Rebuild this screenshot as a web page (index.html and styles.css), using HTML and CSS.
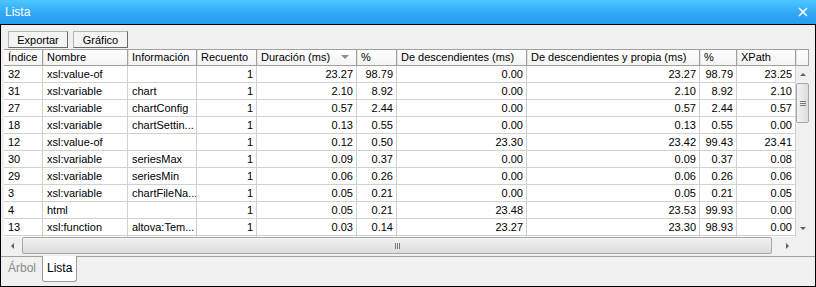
FILE: index.html
```html
<!DOCTYPE html>
<html lang="es">
<head>
<meta charset="utf-8">
<title>Lista</title>
<link rel="stylesheet" href="styles.css">
</head>
<body>
<div class="window">
  <div class="titlebar">
    <span class="title">Lista</span>
    <svg class="close" width="10" height="10" viewBox="0 0 10 10"><path d="M1 1 L9 9 M9 1 L1 9" stroke="#fff" stroke-width="1.6"/></svg>
  </div>
  <div class="frame">
    <div class="toolbar">
      <button class="btn btn-export">Exportar</button>
      <button class="btn btn-chart">Gráfico</button>
    </div>
    <div class="list">
      <div class="head">
        <div class="hc">Índice</div>
        <div class="hc">Nombre</div>
        <div class="hc">Información</div>
        <div class="hc">Recuento</div>
        <div class="hc sorted">Duración (ms)<span class="sort"></span></div>
        <div class="hc">%</div>
        <div class="hc">De descendientes (ms)</div>
        <div class="hc">De descendientes y propia (ms)</div>
        <div class="hc">%</div>
        <div class="hc">XPath</div>
        <div class="hc filler"></div>
      </div>
      <div class="body">
        <div class="row"><div>32</div><div>xsl:value-of</div><div></div><div class="n">1</div><div class="n">23.27</div><div class="n">98.79</div><div class="n">0.00</div><div class="n">23.27</div><div class="n">98.79</div><div class="n">23.25</div></div>
        <div class="row"><div>31</div><div>xsl:variable</div><div>chart</div><div class="n">1</div><div class="n">2.10</div><div class="n">8.92</div><div class="n">0.00</div><div class="n">2.10</div><div class="n">8.92</div><div class="n">2.10</div></div>
        <div class="row"><div>27</div><div>xsl:variable</div><div>chartConfig</div><div class="n">1</div><div class="n">0.57</div><div class="n">2.44</div><div class="n">0.00</div><div class="n">0.57</div><div class="n">2.44</div><div class="n">0.57</div></div>
        <div class="row"><div>18</div><div>xsl:variable</div><div>chartSettin...</div><div class="n">1</div><div class="n">0.13</div><div class="n">0.55</div><div class="n">0.00</div><div class="n">0.13</div><div class="n">0.55</div><div class="n">0.00</div></div>
        <div class="row"><div>12</div><div>xsl:value-of</div><div></div><div class="n">1</div><div class="n">0.12</div><div class="n">0.50</div><div class="n">23.30</div><div class="n">23.42</div><div class="n">99.43</div><div class="n">23.41</div></div>
        <div class="row"><div>30</div><div>xsl:variable</div><div>seriesMax</div><div class="n">1</div><div class="n">0.09</div><div class="n">0.37</div><div class="n">0.00</div><div class="n">0.09</div><div class="n">0.37</div><div class="n">0.08</div></div>
        <div class="row"><div>29</div><div>xsl:variable</div><div>seriesMin</div><div class="n">1</div><div class="n">0.06</div><div class="n">0.26</div><div class="n">0.00</div><div class="n">0.06</div><div class="n">0.26</div><div class="n">0.06</div></div>
        <div class="row"><div>3</div><div>xsl:variable</div><div>chartFileNa...</div><div class="n">1</div><div class="n">0.05</div><div class="n">0.21</div><div class="n">0.00</div><div class="n">0.05</div><div class="n">0.21</div><div class="n">0.05</div></div>
        <div class="row"><div>4</div><div>html</div><div></div><div class="n">1</div><div class="n">0.05</div><div class="n">0.21</div><div class="n">23.48</div><div class="n">23.53</div><div class="n">99.93</div><div class="n">0.00</div></div>
        <div class="row"><div>13</div><div>xsl:function</div><div>altova:Tem...</div><div class="n">1</div><div class="n">0.03</div><div class="n">0.14</div><div class="n">23.27</div><div class="n">23.30</div><div class="n">98.93</div><div class="n">0.00</div></div>
        <div class="row"><div></div><div></div><div></div><div></div><div></div><div></div><div></div><div></div><div></div><div></div></div>
      </div>
      <div class="vscroll">
        <div class="sbtn"><span class="arr up"></span></div>
        <div class="vthumb"><span class="vgrip"></span></div>
        <div class="vtrack"></div>
        <div class="sbtn"><span class="arr down"></span></div>
      </div>
      <div class="hscroll">
        <div class="sbtn"><span class="arr left"></span></div>
        <div class="hthumb"><span class="hgrip"></span></div>
        <div class="htrack"></div>
        <div class="sbtn"><span class="arr right"></span></div>
      </div>
      <div class="corner"></div>
    </div>
    <div class="tabs">
      <div class="tab">Árbol</div>
      <div class="tab active">Lista</div>
    </div>
  </div>
</div>
</body>
</html>
```
FILE: styles.css
```css
html, body {
  margin: 0;
  padding: 0;
  background: #f0f0f0;
}
body {
  font-family: "Liberation Sans", Arial, sans-serif;
  font-size: 11px;
  color: #000;
}
.window {
  width: 816px;
  height: 287px;
  display: flex;
  flex-direction: column;
}
.titlebar {
  height: 24px;
  flex: none;
  display: flex;
  align-items: center;
  justify-content: space-between;
  padding: 0 8px 0 5px;
  background: linear-gradient(#4cc6ff, #2fa6f5 60%, #2a9cef);
}
.title {
  color: #fff;
  font-size: 12px;
  line-height: 14px;
}
.close {
  display: block;
}
.frame {
  flex: 1;
  border: 1px solid #000;
  background: #f0f0f0;
  display: flex;
  flex-direction: column;
  min-height: 0;
}
.toolbar {
  height: 24px;
  flex: none;
  box-sizing: border-box;
  padding: 6px 0 0 7px;
  display: flex;
  gap: 5px;
}
.btn {
  height: 17px;
  margin: 0;
  padding: 0;
  box-sizing: border-box;
  font: inherit;
  color: #000;
  background: #f4f4f4;
  border: 1px solid #b4b4b4;
  border-right-color: #6a6a6a;
  border-bottom-color: #6a6a6a;
  line-height: 14px;
}
.btn-export { width: 60px; }
.btn-chart { width: 55px; }

.list {
  margin-left: 3px;
  width: 805px;
  height: 205px;
  flex: none;
  display: grid;
  grid-template-columns: 792px 13px;
  grid-template-rows: 17px 171px 17px;
  background: #fff;
}
.head {
  grid-column: 1 / 3;
  display: grid;
  grid-template-columns: 39px 85px 69px 60px 100px 40px 130px 173px 37px 59px 13px;
  border-top: 1px solid #a0a0a0;
  border-bottom: 1px solid #a0a0a0;
  box-sizing: border-box;
  background: linear-gradient(#ffffff, #f4f4f4);
}
.hc {
  position: relative;
  box-sizing: border-box;
  padding-left: 4px;
  line-height: 15px;
  white-space: nowrap;
  overflow: hidden;
  border-right: 1px solid #a0a0a0;
  box-shadow: inset 1px 0 0 #e2e2e2;
}
.hc:first-child {
  box-shadow: none;
}
.hc.filler {
  border-right: 1px solid #a0a0a0;
}
.sort {
  position: absolute;
  right: 7px;
  top: 5px;
  width: 0;
  height: 0;
  border-left: 4px solid transparent;
  border-right: 4px solid transparent;
  border-top: 4px solid #8e8e8e;
}
.body {
  grid-column: 1;
  grid-row: 2;
  overflow: hidden;
}
.row {
  display: grid;
  grid-template-columns: 39px 85px 69px 60px 100px 40px 130px 173px 37px 59px;
  height: 17px;
}
.row > div {
  box-sizing: border-box;
  border-right: 1px solid #d0d0d0;
  border-bottom: 1px solid #d0d0d0;
  padding: 0 3px 0 4px;
  line-height: 16px;
  white-space: nowrap;
  overflow: hidden;
}
.row > div.n {
  text-align: right;
}
.vscroll {
  grid-column: 2;
  grid-row: 2;
  display: flex;
  flex-direction: column;
  background: #f0f0f0;
}
.hscroll {
  grid-column: 1;
  grid-row: 3;
  display: flex;
  background: #f0f0f0;
}
.corner {
  grid-column: 2;
  grid-row: 3;
  background: #f0f0f0;
}
.sbtn {
  flex: none;
  width: 17px;
  height: 17px;
  display: flex;
  align-items: center;
  justify-content: center;
}
.vscroll .sbtn {
  width: 13px;
}
.arr {
  width: 0;
  height: 0;
}
.arr.up {
  border-left: 3px solid transparent;
  border-right: 3px solid transparent;
  border-bottom: 3px solid #606060;
}
.arr.down {
  border-left: 3px solid transparent;
  border-right: 3px solid transparent;
  border-top: 3px solid #606060;
}
.arr.left {
  border-top: 3px solid transparent;
  border-bottom: 3px solid transparent;
  border-right: 3px solid #606060;
}
.arr.right {
  border-top: 3px solid transparent;
  border-bottom: 3px solid transparent;
  border-left: 3px solid #606060;
}
.vthumb {
  flex: none;
  height: 40px;
  box-sizing: border-box;
  border: 1px solid #a8a8a8;
  border-radius: 2px;
  background: linear-gradient(90deg, #f2f2f2, #dcdcdc);
  display: flex;
  align-items: center;
  justify-content: center;
}
.vgrip {
  width: 6px;
  height: 5px;
  background: linear-gradient(#7a7a7a 0 1px, transparent 1px 2px, #7a7a7a 2px 3px, transparent 3px 4px, #7a7a7a 4px 5px);
}
.vtrack {
  flex: 1;
}
.hthumb {
  flex: none;
  width: 750px;
  margin-left: 1px;
  box-sizing: border-box;
  border: 1px solid #a8a8a8;
  border-radius: 2px;
  background: linear-gradient(#f2f2f2, #dcdcdc);
  display: flex;
  align-items: center;
  justify-content: center;
}
.hgrip {
  width: 5px;
  height: 6px;
  background: linear-gradient(90deg, #7a7a7a 0 1px, transparent 1px 2px, #7a7a7a 2px 3px, transparent 3px 4px, #7a7a7a 4px 5px);
}
.htrack {
  flex: 1;
}
.tabs {
  flex: 1;
  margin-top: 2px;
  border-top: 1px solid #a0a0a0;
  display: flex;
  align-items: flex-start;
  padding-left: 3px;
}
.tab {
  height: 24px;
  line-height: 22px;
  padding: 0 6px 0 4px;
  color: #8a8a8a;
  font-size: 12px;
}
.tab.active {
  margin-top: -1px;
  height: 26px;
  padding: 0 4px;
  color: #000;
  background: #fff;
  border: 1px solid #9a9a9a;
  border-top: none;
  border-radius: 0 0 3px 3px;
  box-sizing: border-box;
  line-height: 25px;
}
```
